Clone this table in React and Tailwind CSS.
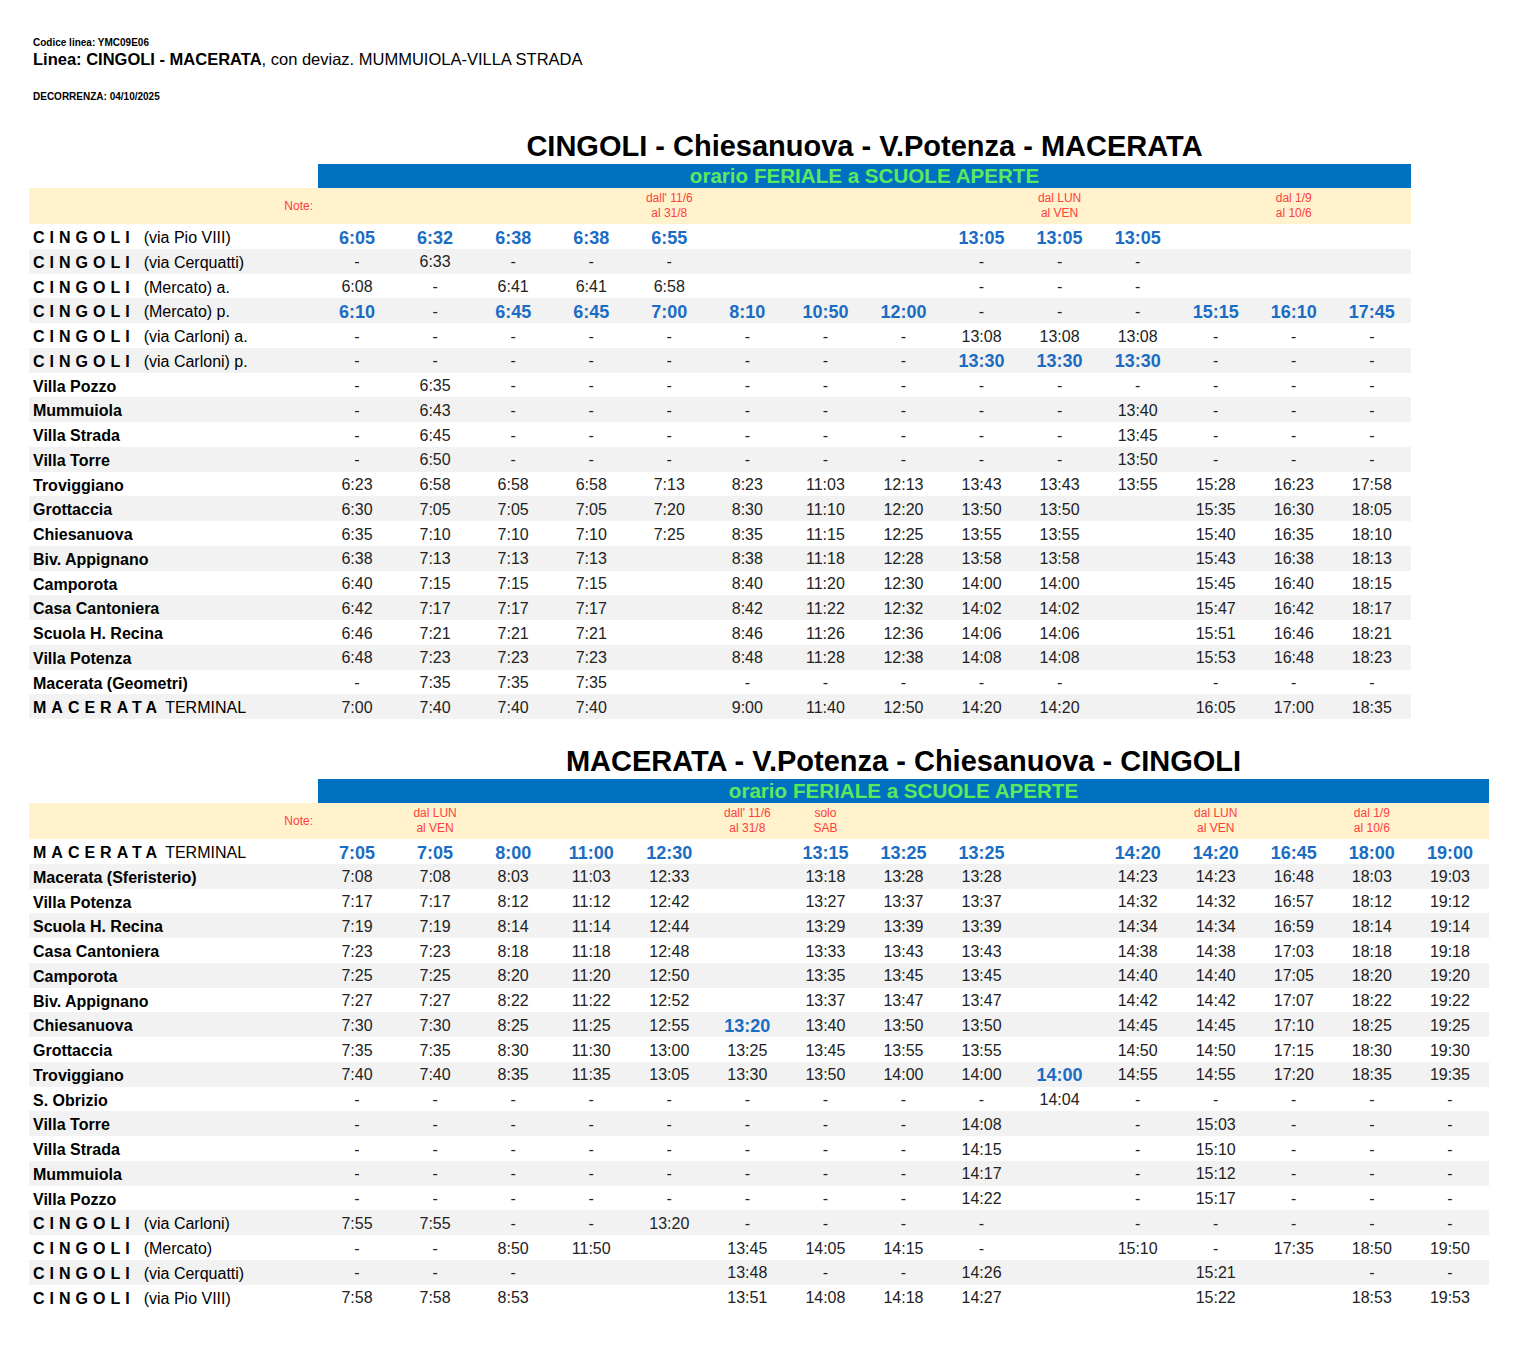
const C1 = "grid grid-cols-[289px_repeat(14,78.07px)] w-[1382px]";
const C2 = "grid grid-cols-[289px_repeat(15,78.07px)] w-[1460px]";

const cing = (t) => ({ c: "CINGOLI", t, ml: "ml-[9px]" });
const D = "-";

const table1 = {
  title: "CINGOLI - Chiesanuova - V.Potenza - MACERATA",
  cols: 14,
  notes: { 5: ["dall' 11/6", "al 31/8"], 10: ["dal LUN", "al VEN"], 13: ["dal 1/9", "al 10/6"] },
  rows: [
    [cing("(via Pio VIII)"), ["*6:05", "*6:32", "*6:38", "*6:38", "*6:55", "", "", "", "*13:05", "*13:05", "*13:05", "", "", ""]],
    [cing("(via Cerquatti)"), [D, "6:33", D, D, D, "", "", "", D, D, D, "", "", ""]],
    [cing("(Mercato) a."), ["6:08", D, "6:41", "6:41", "6:58", "", "", "", D, D, D, "", "", ""]],
    [cing("(Mercato) p."), ["*6:10", D, "*6:45", "*6:45", "*7:00", "*8:10", "*10:50", "*12:00", D, D, D, "*15:15", "*16:10", "*17:45"]],
    [cing("(via Carloni) a."), [D, D, D, D, D, D, D, D, "13:08", "13:08", "13:08", D, D, D]],
    [cing("(via Carloni) p."), [D, D, D, D, D, D, D, D, "*13:30", "*13:30", "*13:30", D, D, D]],
    [{ b: "Villa Pozzo" }, [D, "6:35", D, D, D, D, D, D, D, D, D, D, D, D]],
    [{ b: "Mummuiola" }, [D, "6:43", D, D, D, D, D, D, D, D, "13:40", D, D, D]],
    [{ b: "Villa Strada" }, [D, "6:45", D, D, D, D, D, D, D, D, "13:45", D, D, D]],
    [{ b: "Villa Torre" }, [D, "6:50", D, D, D, D, D, D, D, D, "13:50", D, D, D]],
    [{ b: "Troviggiano" }, ["6:23", "6:58", "6:58", "6:58", "7:13", "8:23", "11:03", "12:13", "13:43", "13:43", "13:55", "15:28", "16:23", "17:58"]],
    [{ b: "Grottaccia" }, ["6:30", "7:05", "7:05", "7:05", "7:20", "8:30", "11:10", "12:20", "13:50", "13:50", "", "15:35", "16:30", "18:05"]],
    [{ b: "Chiesanuova" }, ["6:35", "7:10", "7:10", "7:10", "7:25", "8:35", "11:15", "12:25", "13:55", "13:55", "", "15:40", "16:35", "18:10"]],
    [{ b: "Biv. Appignano" }, ["6:38", "7:13", "7:13", "7:13", "", "8:38", "11:18", "12:28", "13:58", "13:58", "", "15:43", "16:38", "18:13"]],
    [{ b: "Camporota" }, ["6:40", "7:15", "7:15", "7:15", "", "8:40", "11:20", "12:30", "14:00", "14:00", "", "15:45", "16:40", "18:15"]],
    [{ b: "Casa Cantoniera" }, ["6:42", "7:17", "7:17", "7:17", "", "8:42", "11:22", "12:32", "14:02", "14:02", "", "15:47", "16:42", "18:17"]],
    [{ b: "Scuola H. Recina" }, ["6:46", "7:21", "7:21", "7:21", "", "8:46", "11:26", "12:36", "14:06", "14:06", "", "15:51", "16:46", "18:21"]],
    [{ b: "Villa Potenza" }, ["6:48", "7:23", "7:23", "7:23", "", "8:48", "11:28", "12:38", "14:08", "14:08", "", "15:53", "16:48", "18:23"]],
    [{ b: "Macerata (Geometri)" }, [D, "7:35", "7:35", "7:35", "", D, D, D, D, D, "", D, D, D]],
    [{ c: "MACERATA", t: "TERMINAL", ml: "ml-[3px]" }, ["7:00", "7:40", "7:40", "7:40", "", "9:00", "11:40", "12:50", "14:20", "14:20", "", "16:05", "17:00", "18:35"]],
  ],
};

const table2 = {
  title: "MACERATA - V.Potenza - Chiesanuova - CINGOLI",
  cols: 15,
  notes: {
    2: ["dal LUN", "al VEN"],
    6: ["dall' 11/6", "al 31/8"],
    7: ["solo", "SAB"],
    12: ["dal LUN", "al VEN"],
    14: ["dal 1/9", "al 10/6"],
  },
  rows: [
    [{ c: "MACERATA", t: "TERMINAL", ml: "ml-[3px]" }, ["*7:05", "*7:05", "*8:00", "*11:00", "*12:30", "", "*13:15", "*13:25", "*13:25", "", "*14:20", "*14:20", "*16:45", "*18:00", "*19:00"]],
    [{ b: "Macerata (Sferisterio)" }, ["7:08", "7:08", "8:03", "11:03", "12:33", "", "13:18", "13:28", "13:28", "", "14:23", "14:23", "16:48", "18:03", "19:03"]],
    [{ b: "Villa Potenza" }, ["7:17", "7:17", "8:12", "11:12", "12:42", "", "13:27", "13:37", "13:37", "", "14:32", "14:32", "16:57", "18:12", "19:12"]],
    [{ b: "Scuola H. Recina" }, ["7:19", "7:19", "8:14", "11:14", "12:44", "", "13:29", "13:39", "13:39", "", "14:34", "14:34", "16:59", "18:14", "19:14"]],
    [{ b: "Casa Cantoniera" }, ["7:23", "7:23", "8:18", "11:18", "12:48", "", "13:33", "13:43", "13:43", "", "14:38", "14:38", "17:03", "18:18", "19:18"]],
    [{ b: "Camporota" }, ["7:25", "7:25", "8:20", "11:20", "12:50", "", "13:35", "13:45", "13:45", "", "14:40", "14:40", "17:05", "18:20", "19:20"]],
    [{ b: "Biv. Appignano" }, ["7:27", "7:27", "8:22", "11:22", "12:52", "", "13:37", "13:47", "13:47", "", "14:42", "14:42", "17:07", "18:22", "19:22"]],
    [{ b: "Chiesanuova" }, ["7:30", "7:30", "8:25", "11:25", "12:55", "*13:20", "13:40", "13:50", "13:50", "", "14:45", "14:45", "17:10", "18:25", "19:25"]],
    [{ b: "Grottaccia" }, ["7:35", "7:35", "8:30", "11:30", "13:00", "13:25", "13:45", "13:55", "13:55", "", "14:50", "14:50", "17:15", "18:30", "19:30"]],
    [{ b: "Troviggiano" }, ["7:40", "7:40", "8:35", "11:35", "13:05", "13:30", "13:50", "14:00", "14:00", "*14:00", "14:55", "14:55", "17:20", "18:35", "19:35"]],
    [{ b: "S. Obrizio" }, [D, D, D, D, D, D, D, D, D, "14:04", D, D, D, D, D]],
    [{ b: "Villa Torre" }, [D, D, D, D, D, D, D, D, "14:08", "", D, "15:03", D, D, D]],
    [{ b: "Villa Strada" }, [D, D, D, D, D, D, D, D, "14:15", "", D, "15:10", D, D, D]],
    [{ b: "Mummuiola" }, [D, D, D, D, D, D, D, D, "14:17", "", D, "15:12", D, D, D]],
    [{ b: "Villa Pozzo" }, [D, D, D, D, D, D, D, D, "14:22", "", D, "15:17", D, D, D]],
    [cing("(via Carloni)"), ["7:55", "7:55", D, D, "13:20", D, D, D, D, "", D, D, D, D, D]],
    [cing("(Mercato)"), [D, D, "8:50", "11:50", "", "13:45", "14:05", "14:15", D, "", "15:10", D, "17:35", "18:50", "19:50"]],
    [cing("(via Cerquatti)"), [D, D, D, "", "", "13:48", D, D, "14:26", "", "", "15:21", "", D, D]],
    [cing("(via Pio VIII)"), ["7:58", "7:58", "8:53", "", "", "13:51", "14:08", "14:18", "14:27", "", "", "15:22", "", "18:53", "19:53"]],
  ],
};

function Label({ l }) {
  if (l.b) return <div className="pl-[4px] pt-[2px] text-[16px] font-bold text-black whitespace-nowrap">{l.b}</div>;
  return (
    <div className="pl-[4px] pt-[2px] text-[16px] text-black whitespace-nowrap">
      <span className="font-bold tracking-[5px]">{l.c}</span>
      <span className={l.ml}>{l.t}</span>
    </div>
  );
}

function Cell({ v }) {
  if (!v) return <div />;
  if (v[0] === "*")
    return <div className="pt-[1px] text-center text-[18px] font-bold text-[#1a6cc4] leading-none">{v.slice(1)}</div>;
  return <div className="pt-[1px] text-center text-[16px] text-[#222] leading-none">{v}</div>;
}

function Timetable({ data, grid, width }) {
  const cols = Array.from({ length: data.cols }, (_, i) => i + 1);
  return (
    <div className={width}>
      <div className="flex h-[35px] items-center">
        <div className="w-[289px] shrink-0" />
        <div className="flex-1 text-center text-[29px] font-bold text-black leading-none">{data.title}</div>
      </div>
      <div className="flex">
        <div className="w-[289px] shrink-0" />
        <div className="flex-1 h-[24px] bg-[#0070c0] flex items-center justify-center text-[20.6px] font-bold text-[#5ee85e]">
          orario FERIALE a SCUOLE APERTE
        </div>
      </div>
      <div className={`${grid} h-[36px] items-center bg-[#fff2cc]`}>
        <div className="text-right pr-[5px] text-[12px] text-[#ff4040]">Note:</div>
        {cols.map((c) => (
          <div key={c} className="text-center text-[12px] leading-[15px] text-[#ff4040]">
            {data.notes[c] && (
              <>
                <div>{data.notes[c][0]}</div>
                <div>{data.notes[c][1]}</div>
              </>
            )}
          </div>
        ))}
      </div>
      {data.rows.map(([label, vals], i) => (
        <div key={i} className={`${grid} h-[24.75px] items-center ${i % 2 ? "bg-[#f2f2f2]" : "bg-white"}`}>
          <Label l={label} />
          {vals.map((v, j) => (
            <Cell key={j} v={v} />
          ))}
        </div>
      ))}
    </div>
  );
}

export default function App() {
  return (
    <div className="min-h-[1354px] bg-white font-['Liberation_Sans',Arial,sans-serif] text-black pl-[29px] pt-[37px]">
      <div className="pl-[4px]">
        <div className="text-[10px] leading-[12px] font-bold">Codice linea: YMC09E06</div>
        <div className="text-[16.5px] leading-[19px] mt-[1px]">
          <span className="font-bold">Linea: CINGOLI - MACERATA</span>, con deviaz. MUMMUIOLA-VILLA STRADA
        </div>
        <div className="text-[10px] leading-[12px] font-bold mt-[22px]">DECORRENZA: 04/10/2025</div>
      </div>
      <div className="mt-[26px]">
        <Timetable data={table1} grid={C1} width="w-[1382px]" />
      </div>
      <div className="mt-[25px]">
        <Timetable data={table2} grid={C2} width="w-[1460px]" />
      </div>
    </div>
  );
}
